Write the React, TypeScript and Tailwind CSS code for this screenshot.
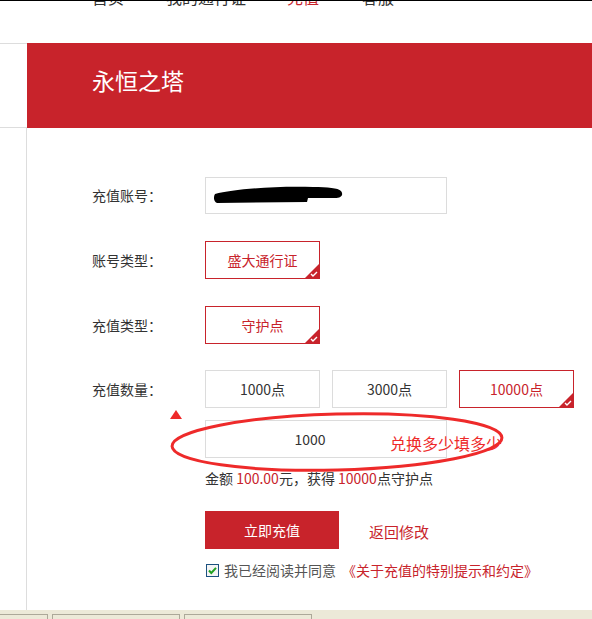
import React from "react";

const RED = "#c8232b";

function Corner() {
  return (
    <svg className="absolute right-0 bottom-0" width="14" height="14" viewBox="0 0 14 14">
      <polygon points="14,0 14,14 0,14" fill={RED} />
      <polyline points="6,10 8,12 12,8" fill="none" stroke="#fff" strokeWidth="1.4" />
    </svg>
  );
}

function OptionBox({ text, active, w = "w-[115px]" }: { text: string; active?: boolean; w?: string }) {
  return (
    <div
      className={`relative ${w} h-[38px] flex items-center justify-center text-[14px] ${
        active ? "border border-[#c8232b] text-[#c8232b]" : "border border-[#dcdcdc] text-[#333]"
      }`}
    >
      {text}
      {active && <Corner />}
    </div>
  );
}

function Row({ label, children, className = "" }: { label: string; children: React.ReactNode; className?: string }) {
  return (
    <div className={`flex items-center ${className}`}>
      <div className="w-[113px] text-[14px] text-[#333]">{label}</div>
      {children}
    </div>
  );
}

export default function App() {
  return (
    <div
      className="w-[592px] h-[619px] overflow-hidden bg-white flex flex-col"
      style={{ fontFamily: '"Noto Sans CJK SC", "Liberation Sans", sans-serif' }}
    >
      {/* 顶部导航（被截掉） */}
      <div className="h-[43px] border-t border-black">
        <div className="h-[5px] overflow-hidden flex items-end pl-[92px] text-[16px] leading-[18px] text-[#333]">
          <span className="w-[74px] shrink-0">首页</span>
          <span className="w-[121px] shrink-0">我的通行证</span>
          <span className="w-[75px] shrink-0 text-[#c8232b]">充值</span>
          <span className="shrink-0">客服</span>
        </div>
      </div>

      {/* 红色标题栏 */}
      <div className="flex h-[85px]">
        <div className="w-[27px] border-y border-[#dddddd]" />
        <div className="flex-1 bg-[#c8232b] flex items-center pl-[65px] text-white text-[23px] pb-[10px]">
          永恒之塔
        </div>
      </div>

      <div className="flex flex-1">
        <div className="w-[27px] border-r border-[#dddddd]" />

        <div className="relative flex-1 pl-[65px] pt-[49px]">
          <Row label="充值账号：">
            <div className="w-[242px] h-[37px] border border-[#dcdcdc] flex items-center pl-[7px]">
              <svg width="130" height="20" viewBox="0 0 130 20">
                <path
                  d="M2 8 C 20 3, 60 0, 100 1 C 115 1, 125 2, 128 5 C 131 9, 128 12, 122 12 L 95 12 L 94 16 L 4 17 C 1 16, 0 11, 2 8 Z"
                  fill="#000"
                />
              </svg>
            </div>
          </Row>

          <Row label="账号类型：" className="mt-[27px]">
            <OptionBox text="盛大通行证" active />
          </Row>

          <Row label="充值类型：" className="mt-[27px]">
            <OptionBox text="守护点" active />
          </Row>

          <Row label="充值数量：" className="mt-[26px]">
            <div className="flex gap-[12px]">
              <OptionBox text="1000点" />
              <OptionBox text="3000点" />
              <OptionBox text="10000点" active />
            </div>
          </Row>

          <div className="pl-[113px] mt-[12px]">
            <div className="w-[242px] h-[38px] border border-[#dcdcdc] flex items-center justify-center pr-[32px] text-[14px] text-[#333]">
              1000
            </div>
            <div className="mt-[11px] text-[14px] text-[#333] leading-[18px]">
              金额 <span className="text-[#c8232b]">100.00</span>元，获得 <span className="text-[#c8232b]">10000</span>点守护点
            </div>
            <div className="flex items-center mt-[24px]">
              <div className="w-[134px] h-[38px] bg-[#c8232b] text-white text-[14px] flex items-center justify-center">
                立即充值
              </div>
              <span className="ml-[30px] text-[15px] text-[#c8232b] mt-[4px]">返回修改</span>
            </div>
            <div className="flex items-center mt-[12px] text-[14px] leading-[18px]">
              <svg width="13" height="13" viewBox="0 0 13 13" className="ml-[1px] mr-[5px]">
                <rect x="0.5" y="0.5" width="12" height="12" fill="#f4f4f4" stroke="#1c5180" />
                <polyline points="3,6.5 5.3,9 10,3.8" fill="none" stroke="#21a121" strokeWidth="2" />
              </svg>
              <span className="text-[#555]">我已经阅读并同意</span>
              <span className="ml-[6px] text-[#c8232b]">《关于充值的特别提示和约定》</span>
            </div>
          </div>

          {/* 标注 */}
          <svg className="absolute left-[138px] top-[280px] pointer-events-none" width="345" height="68" viewBox="0 0 345 68">
            <polygon points="11,2 17,11 5,11" fill="#ee2a2a" />
            <ellipse cx="172" cy="34" rx="165" ry="28" fill="none" stroke="#ee2a2a" strokeWidth="3" transform="rotate(-1.5 172 34)" />
          </svg>
          <span className="absolute left-[363px] top-[303px] text-[16px] text-[#ee2a2a] whitespace-nowrap">兑换多少填多少</span>
        </div>
      </div>

      {/* 任务栏 */}
      <div className="h-[9px] bg-[#ece9d8] flex items-end gap-[4px] pb-0">
        <div className="w-[48px] h-[5px] border-t border-r border-[#aca899]" />
        <div className="w-[128px] h-[5px] border-t border-x border-[#aca899]" />
        <div className="w-[128px] h-[5px] border-t border-x border-[#aca899]" />
      </div>
    </div>
  );
}
